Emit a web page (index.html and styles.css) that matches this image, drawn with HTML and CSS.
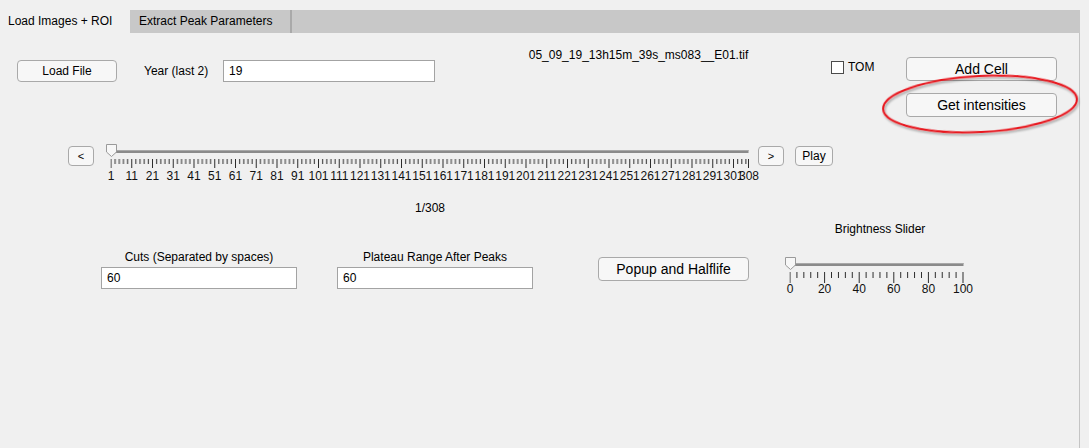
FILE: index.html
```html
<!DOCTYPE html>
<html>
<head>
<meta charset="utf-8">
<title>Load Images + ROI</title>
<link rel="stylesheet" href="styles.css">
</head>
<body>
<div class="window">
  <div class="tabbar">
    <div class="tab tab-active">Load Images + ROI</div>
    <div class="tab tab-idle">Extract Peak Parameters</div>
  </div>
  <div class="panel">
    <div class="row row-top">
      <button class="btn btn-load">Load File</button>
      <span class="lbl lbl-year">Year (last 2)</span>
      <div class="field field-year">19</div>
      <div class="filename">05_09_19_13h15m_39s_ms083__E01.tif</div>
      <div class="check-group">
        <span class="checkbox"></span>
        <span class="lbl">TOM</span>
      </div>
      <div class="btn-col">
        <button class="btn btn-big">Add Cell</button>
        <button class="btn btn-big">Get intensities</button>
      </div>
    </div>

    <div class="row row-slider">
      <button class="btn btn-small">&lt;</button>
      <svg class="frame-slider" width="655" height="45" viewBox="0 0 655 45">
        <defs>
          <pattern id="ticks" x="10.5" y="0" width="20.75" height="45" patternUnits="userSpaceOnUse">
            <line x1="0.5" y1="19" x2="0.5" y2="28" stroke="#2b2b2b" stroke-width="1"/>
            <line x1="4.65" y1="19" x2="4.65" y2="24" stroke="#2b2b2b" stroke-width="1"/>
            <line x1="8.8" y1="19" x2="8.8" y2="24" stroke="#2b2b2b" stroke-width="1"/>
            <line x1="12.95" y1="19" x2="12.95" y2="24" stroke="#2b2b2b" stroke-width="1"/>
            <line x1="17.1" y1="19" x2="17.1" y2="24" stroke="#2b2b2b" stroke-width="1"/>
          </pattern>
        </defs>
        <rect x="10.5" y="10" width="638" height="3" fill="#8a8a8a"/>
        <rect x="10.5" y="10" width="638" height="1" fill="#a8a8a8"/>
        <rect x="10.5" y="18" width="624" height="11" fill="url(#ticks)"/>
        <line x1="637.7" y1="19" x2="637.7" y2="24" stroke="#2b2b2b"/>
        <line x1="641.8" y1="19" x2="641.8" y2="24" stroke="#2b2b2b"/>
        <line x1="645.9" y1="19" x2="645.9" y2="24" stroke="#2b2b2b"/>
        <line x1="648.5" y1="19" x2="648.5" y2="28" stroke="#2b2b2b"/>
        <polygon points="6.5,4.5 16.5,4.5 16.5,12 11.5,16.5 6.5,12" fill="#f7f7f7" stroke="#9a9a9a"/>
        <g class="tick-labels">
          <text x="11" y="40">1</text>
          <text x="31.75" y="40">11</text>
          <text x="52.5" y="40">21</text>
          <text x="73.25" y="40">31</text>
          <text x="94" y="40">41</text>
          <text x="114.75" y="40">51</text>
          <text x="135.5" y="40">61</text>
          <text x="156.25" y="40">71</text>
          <text x="177" y="40">81</text>
          <text x="197.75" y="40">91</text>
          <text x="218.5" y="40">101</text>
          <text x="239.25" y="40">111</text>
          <text x="260" y="40">121</text>
          <text x="280.75" y="40">131</text>
          <text x="301.5" y="40">141</text>
          <text x="322.25" y="40">151</text>
          <text x="343" y="40">161</text>
          <text x="363.75" y="40">171</text>
          <text x="384.5" y="40">181</text>
          <text x="405.25" y="40">191</text>
          <text x="426" y="40">201</text>
          <text x="446.75" y="40">211</text>
          <text x="467.5" y="40">221</text>
          <text x="488.25" y="40">231</text>
          <text x="509" y="40">241</text>
          <text x="529.75" y="40">251</text>
          <text x="550.5" y="40">261</text>
          <text x="571.25" y="40">271</text>
          <text x="592" y="40">281</text>
          <text x="612.75" y="40">291</text>
          <text x="633.5" y="40">301</text>
          <text x="649" y="40">308</text>
        </g>
      </svg>
      <button class="btn btn-small btn-next">&gt;</button>
      <button class="btn btn-play">Play</button>
    </div>

    <div class="frame-count">1/308</div>

    <div class="row row-bottom">
      <div class="field-group">
        <span class="lbl lbl-center">Cuts (Separated by spaces)</span>
        <div class="field field-wide">60</div>
      </div>
      <div class="field-group group-plateau">
        <span class="lbl lbl-center">Plateau Range After Peaks</span>
        <div class="field field-wide">60</div>
      </div>
      <button class="btn btn-big btn-popup">Popup and Halflife</button>
      <div class="bright-group">
        <span class="lbl lbl-bright">Brightness Slider</span>
        <svg class="bright-slider" width="210" height="50" viewBox="0 0 210 50">
          <defs>
            <pattern id="bticks" x="9.5" y="0" width="34.6" height="50" patternUnits="userSpaceOnUse">
              <line x1="0.5" y1="22" x2="0.5" y2="33" stroke="#2b2b2b"/>
              <line x1="7.42" y1="22" x2="7.42" y2="28" stroke="#2b2b2b"/>
              <line x1="14.34" y1="22" x2="14.34" y2="28" stroke="#2b2b2b"/>
              <line x1="21.26" y1="22" x2="21.26" y2="28" stroke="#2b2b2b"/>
              <line x1="28.18" y1="22" x2="28.18" y2="28" stroke="#2b2b2b"/>
            </pattern>
          </defs>
          <rect x="9.5" y="13" width="174" height="3" fill="#8a8a8a"/>
          <rect x="9.5" y="13" width="174" height="1" fill="#a8a8a8"/>
          <rect x="9.5" y="21" width="176" height="13" fill="url(#bticks)"/>
          <polygon points="5.5,7.5 15.5,7.5 15.5,15 10.5,19.5 5.5,15" fill="#f7f7f7" stroke="#9a9a9a"/>
          <g class="tick-labels tick-labels-b">
            <text x="10" y="43">0</text>
            <text x="44.6" y="43">20</text>
            <text x="79.2" y="43">40</text>
            <text x="113.8" y="43">60</text>
            <text x="148.4" y="43">80</text>
            <text x="183" y="43">100</text>
          </g>
        </svg>
      </div>
    </div>
  </div>

  <svg class="annotation" width="215" height="80" viewBox="0 0 215 80">
    <defs>
      <filter id="shadow" x="-10%" y="-20%" width="120%" height="150%">
        <feDropShadow dx="1" dy="2" stdDeviation="1.2" flood-color="#000" flood-opacity="0.35"/>
      </filter>
    </defs>
    <ellipse cx="110" cy="39" rx="97" ry="28" transform="rotate(-3 110 39)" fill="none" stroke="#e8141c" stroke-width="2" filter="url(#shadow)"/>
  </svg>
</div>
</body>
</html>
```

FILE: styles.css
```css
html, body {
  margin: 0;
  padding: 0;
  background: #f0f0f0;
  overflow: hidden;
}

body {
  font-family: "Liberation Sans", Arial, sans-serif;
  font-size: 12px;
  color: #000;
  width: 1089px;
  height: 448px;
}

.window {
  position: relative;
  width: 1080px;
  padding-top: 10px;
}

.tabbar {
  display: flex;
  height: 23px;
  background: #c8c8c8;
}

.tab {
  height: 23px;
  line-height: 23px;
  box-sizing: border-box;
}

.tab-active {
  width: 130px;
  padding-left: 8px;
  background: #f0f0f0;
}

.tab-idle {
  width: 162px;
  padding-left: 9px;
  border-right: 2px solid #a9a9a9;
}

.panel {
  box-sizing: border-box;
  height: 415px;
  border-right: 1px solid #c4c4c4;
}

.row {
  display: flex;
  align-items: flex-start;
}

.btn {
  font-family: "Liberation Sans", Arial, sans-serif;
  font-size: 12px;
  font-weight: normal;
  color: #000;
  background: #f7f7f7;
  border: 1px solid #a9a9a9;
  border-radius: 4px;
  box-sizing: border-box;
  padding: 0;
  margin: 0;
}

.lbl {
  line-height: 14px;
  white-space: nowrap;
}

/* row 1 */
.row-top {
  padding-left: 17px;
}

.btn-load {
  width: 100px;
  height: 22px;
  margin-top: 27px;
}

.lbl-year {
  width: 79px;
  margin-left: 27px;
  margin-top: 31px;
}

.field {
  box-sizing: border-box;
  background: #fff;
  border: 1px solid #a3a3a3;
  height: 22px;
  line-height: 20px;
  padding-left: 5px;
}

.field-year {
  width: 212px;
  margin-top: 27px;
}

.filename {
  width: 396px;
  box-sizing: border-box;
  padding-left: 11px;
  text-align: center;
  margin-top: 15px;
  line-height: 14px;
}

.check-group {
  width: 75px;
  display: flex;
  align-items: center;
  margin-top: 27px;
}

.checkbox {
  width: 13px;
  height: 13px;
  box-sizing: border-box;
  border: 1px solid #4a4a4a;
  background: #fff;
  margin-right: 4px;
}

.btn-col {
  display: flex;
  flex-direction: column;
  gap: 12px;
  margin-top: 24px;
}

.btn-big {
  width: 151px;
  height: 24px;
  font-size: 14px;
}

/* row 2 */
.row-slider {
  margin-top: 23px;
  padding-left: 68px;
}

.btn-small {
  width: 26px;
  height: 20px;
  margin-top: 6px;
  font-size: 11px;
}

.frame-slider {
  display: block;
  margin-left: 6px;
  overflow: visible;
}

.btn-next {
  margin-left: 3px;
}

.btn-play {
  width: 38px;
  height: 20px;
  margin-top: 6px;
  margin-left: 11px;
}

.tick-labels text {
  font-family: "Liberation Sans", Arial, sans-serif;
  font-size: 12px;
  fill: #111;
  text-anchor: middle;
}

/* row 3 */
.frame-count {
  width: 860px;
  text-align: center;
  line-height: 14px;
  margin-top: 16px;
}

/* row 4 */
.row-bottom {
  margin-top: 7px;
  padding-left: 101px;
}

.field-group {
  width: 196px;
  display: flex;
  flex-direction: column;
  margin-top: 28px;
}

.group-plateau {
  margin-left: 40px;
}

.lbl-center {
  text-align: center;
}

.field-wide {
  width: 196px;
  margin-top: 3px;
}

.btn-popup {
  margin-left: 65px;
  margin-top: 35px;
}

.bright-group {
  margin-left: 31px;
  width: 210px;
  display: flex;
  flex-direction: column;
}

.lbl-bright {
  text-align: center;
  padding-right: 10px;
}

.bright-slider {
  display: block;
  margin-top: 14px;
  overflow: visible;
}

/* annotation overlay */
.annotation {
  position: absolute;
  left: 870px;
  top: 65px;
  overflow: visible;
}
```
